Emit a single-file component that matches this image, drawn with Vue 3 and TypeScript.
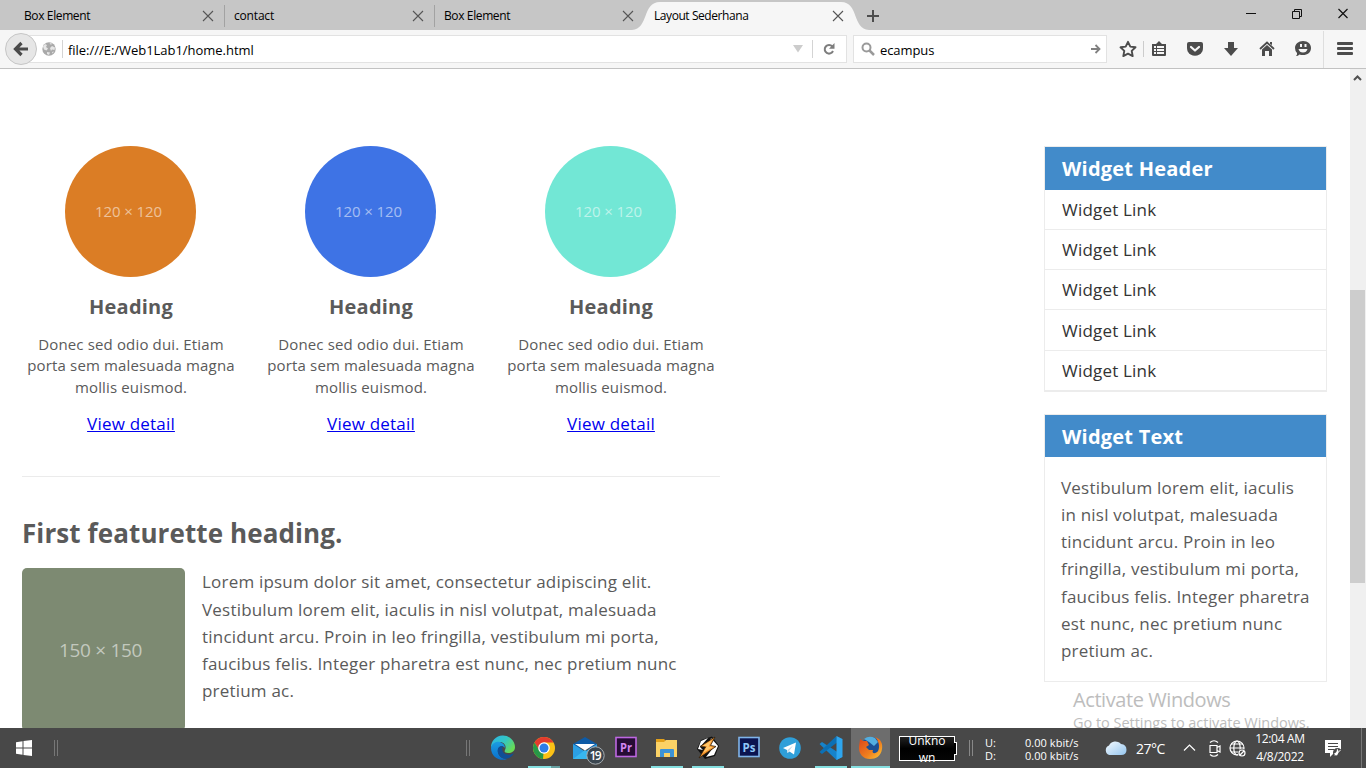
<script setup lang="ts">
interface Feature {
  color: string
}

const tabs: string[] = ['Box Element', 'contact', 'Box Element']

const features: Feature[] = [
  { color: '#db7d25' },
  { color: '#3e73e5' },
  { color: '#72e7d5' },
]

const featureLines: string[] = [
  'Donec sed odio dui. Etiam',
  'porta sem malesuada magna',
  'mollis euismod.',
]

const featuretteLines: string[] = [
  'Lorem ipsum dolor sit amet, consectetur adipiscing elit.',
  'Vestibulum lorem elit, iaculis in nisl volutpat, malesuada',
  'tincidunt arcu. Proin in leo fringilla, vestibulum mi porta,',
  'faucibus felis. Integer pharetra est nunc, nec pretium nunc',
  'pretium ac.',
]

const widgetLines: string[] = [
  'Vestibulum lorem elit, iaculis',
  'in nisl volutpat, malesuada',
  'tincidunt arcu. Proin in leo',
  'fringilla, vestibulum mi porta,',
  'faucibus felis. Integer pharetra',
  'est nunc, nec pretium nunc',
  'pretium ac.',
]
</script>

<template>
  <div class="screen">
    <header class="tabstrip">
      <div v-for="(t, i) in tabs" :key="i" class="tab" :class="{ ruled: i < 2 }">
        <span class="tab-title">{{ t }}</span>
        <svg class="tab-close" width="12" height="12" viewBox="0 0 12 12"><path d="M1 1L11 11M11 1L1 11" stroke="#555" stroke-width="1.1" fill="none" /></svg>
      </div>
      <div class="tab active">
        <svg class="tab-shape" width="238" height="30" viewBox="0 0 238 30"><path d="M0 30C17 29 10 2 28 2H209C227 2 220 29 237 30Z" fill="#f6f6f6" /></svg>
        <span class="tab-title">Layout Sederhana</span>
        <svg class="tab-close" width="12" height="12" viewBox="0 0 12 12"><path d="M1 1L11 11M11 1L1 11" stroke="#555" stroke-width="1.1" fill="none" /></svg>
      </div>
      <svg class="new-tab" width="14" height="14" viewBox="0 0 14 14"><path d="M7 1V13M1 7H13" stroke="#4d4d4d" stroke-width="2" /></svg>
      <svg class="win-controls" width="110" height="20" viewBox="0 0 110 20" fill="none" stroke="#111">
        <path d="M0 9.500H10" />
        <path d="M46.500 7.500H53.500V14.500H46.500ZM48.500 7V5.500H55.500V12.500H54" />
        <path d="M92.500 5L101.500 14M101.500 5L92.500 14" stroke-width="1.2" />
      </svg>
    </header>

    <div class="toolbar">
      <svg class="back" width="34" height="34" viewBox="0 0 34 34">
        <circle cx="17" cy="17" r="15.500" fill="#e6e6e6" stroke="#c6c6c6" />
        <path d="M17.500 11L11.500 17L17.500 23M12 17H24" fill="none" stroke="#4a4a4a" stroke-width="3.200" />
      </svg>
      <div class="urlbar">
        <svg class="globe" width="14" height="14" viewBox="0 0 14 14">
          <circle cx="7" cy="7" r="6.700" fill="#a9a9a9" />
          <path d="M1 4.500L3 2L5 3L4 5L6 6.500L4.500 8.500L2 7.500ZM7.500 1L10 1.500L9 3ZM8 6L10 4L13 5.500L12.500 8L10 7.500L9 9ZM5 10L8 10.500L7 13L5 12ZM10 10L12 9.500L10.500 11.500Z" fill="#e6e6e6" />
        </svg>
        <i class="bar-rule"></i>
        <span class="url">file:///E:/Web1Lab1/home.html</span>
        <svg class="drop" width="10" height="8" viewBox="0 0 10 8"><path d="M0 0H10L5 7.500Z" fill="#ccc" /></svg>
        <i class="bar-rule"></i>
        <svg class="reload" width="14" height="14" viewBox="0 0 14 14"><path d="M10.300 4.500A4.300 4.300 0 1 0 11 9" fill="none" stroke="#7d7d7d" stroke-width="2" /><path d="M12.500 1V6.800H7Z" fill="#7d7d7d" /></svg>
      </div>
      <div class="searchbar">
        <svg width="15" height="15" viewBox="0 0 15 15"><circle cx="5.500" cy="5.500" r="4" fill="none" stroke="#9a9a9a" stroke-width="2" /><path d="M8.500 8.500L13 13" stroke="#9a9a9a" stroke-width="2.500" /></svg>
        <span class="query">ecampus</span>
        <svg width="10" height="10" viewBox="0 0 10 10"><path d="M0 5H8M4.500 1L8.500 5L4.500 9" fill="none" stroke="#808080" stroke-width="1.800" /></svg>
      </div>
      <svg class="tools" width="246" height="38" viewBox="0 0 246 38" fill="#4c4c4c">
        <path d="M16 11.800L18.300 16.600L23.500 17.300L19.700 20.900L20.700 26.100L16 23.600L11.300 26.100L12.300 20.900L8.500 17.300L13.700 16.600Z" fill="none" stroke="#4c4c4c" stroke-width="1.900" stroke-linejoin="round" />
        <path d="M31 11H32V27H31Z" fill="#ccc" />
        <path fill-rule="evenodd" d="M40 14H44L47 11L50 14H54V25Q54 26 53 26H41Q40 26 40 25ZM42 16V18H44V16ZM45 16V18H52V16ZM42 19V21H44V19ZM45 19V21H52V19ZM42 22V24H44V22ZM45 22V24H52V22Z" />
        <path d="M77 12H89Q91 12 91 14V18Q91 22 87.500 24.500Q83 27 78.500 24.500Q75 22 75 18V14Q75 12 77 12Z" />
        <path d="M79 17L83 20.500L87 17" fill="none" stroke="#f6f6f6" stroke-width="2.200" stroke-linecap="round" stroke-linejoin="round" />
        <path d="M116 12H122V18H126L119 26L112 18H116Z" />
        <path d="M148 19L155 12.500L162 19" fill="none" stroke="#4c4c4c" stroke-width="1.800" />
        <path d="M155 15L160 19.500V26H157V21H153V26H150V19.500ZM158 12H160V15L158 14Z" />
        <path d="M191 11C196 11 199 14 199 18C199 22.500 195.500 25 191 25C189.500 25 188.500 25 187.500 24.500Q186 26 184 26Q185.500 24.500 185 23Q183 21 183 18C183 14 186.500 11 191 11Z" />
        <path d="M188 14H190V17H188ZM192.500 14H194.500V17H192.500ZM186.500 19H195.500Q194.500 22.500 191 22.500Q187.500 22.500 186.500 19Z" fill="#f6f6f6" />
        <path d="M211 1H212V38H211Z" fill="#dedede" />
        <g><rect x="225" y="12" width="16" height="3" rx="1" /><rect x="225" y="17" width="16" height="3" rx="1" /><rect x="225" y="22" width="16" height="3" rx="1" /></g>
      </svg>
    </div>

    <div class="viewport">
      <main class="page">
        <section class="content">
          <div class="features">
            <article v-for="(f, i) in features" :key="i" class="feature">
              <div class="disc" :style="{ background: f.color }"><span>120 × 120</span></div>
              <h3>Heading</h3>
              <p><span v-for="l in featureLines" :key="l" class="line">{{ l }}</span></p>
              <a>View detail</a>
            </article>
          </div>
          <hr>
          <h2>First featurette heading.</h2>
          <div class="featurette">
            <div class="thumb"><span>150 × 150</span></div>
            <p><span v-for="l in featuretteLines" :key="l" class="line">{{ l }}</span></p>
          </div>
        </section>
        <aside class="sidebar">
          <section class="widget links">
            <h3>Widget Header</h3>
            <ul><li v-for="n in 5" :key="n">Widget Link</li></ul>
          </section>
          <section class="widget text">
            <h3>Widget Text</h3>
            <p><span v-for="l in widgetLines" :key="l" class="line">{{ l }}</span></p>
          </section>
        </aside>
      </main>
      <div class="scrollbar">
        <svg width="9" height="6" viewBox="0 0 9 6"><path d="M1 5L4.500 1.500L8 5" fill="none" stroke="#505050" stroke-width="2" /></svg>
        <div class="thumb-bar"></div>
      </div>
      <div class="watermark">
        <div class="wm-title">Activate Windows</div>
        <div class="wm-sub">Go to Settings to activate Windows.</div>
      </div>
    </div>

    <footer class="taskbar">
      <svg class="start" width="16" height="16" viewBox="0 0 16 16" fill="#fff"><path d="M0 2.200L6.500 1.200V7.500H0ZM7.500 1L16 0V7.500H7.500ZM0 8.500H6.500V14.800L0 13.800ZM7.500 8.500H16V16L7.500 15Z" /></svg>
      <i class="grip grip-left"></i>
      <i class="grip grip-mid"></i>
      <div class="apps">
        <div class="app">
          <svg width="41" height="40" viewBox="0 0 41 40">
            <defs>
              <linearGradient id="edgeTop" x1="0" y1="0" x2="1" y2=".6"><stop offset="0" stop-color="#2cb4e8" /><stop offset=".55" stop-color="#33c6c4" /><stop offset="1" stop-color="#68db55" /></linearGradient>
              <linearGradient id="edgeLow" x1="0" y1="0" x2="0" y2="1"><stop offset="0" stop-color="#1b9de2" /><stop offset="1" stop-color="#0a6fcb" /></linearGradient>
            </defs>
            <path d="M9 20A12 12 0 0 1 33 19C33 23 30 25 26 25C23 25 22 24 23 22C25 18 22 14 18 14C13 14 10 17 9 20Z" fill="url(#edgeTop)" />
            <path d="M9 20C10 15 14 13 18 14C21 15 23 17 23 20C21 17 17 18 16 21C15 27 19 31 25 31C18 34 9 29 9 20Z" fill="url(#edgeLow)" />
            <path d="M19 18C16 19 15 22 16 25C18 30 23 32 27 30C29 29 31 27 32 25C28 28 23 27 21 24C20 22 20 20 21 18Z" fill="#104f96" />
          </svg>
        </div>
        <div class="app running grouped">
          <svg width="41" height="40" viewBox="0 0 41 40">
            <circle cx="21" cy="20" r="11" fill="#fbc116" />
            <path d="M21 9A11 11 0 0 1 30.500 14.500H21L16.300 22.500L11.470 14.500A11 11 0 0 1 21 9Z" fill="#e33b2e" />
            <path d="M11.470 14.500L16.500 22.500L20.500 25L20 31A11 11 0 0 1 11.470 14.500Z" fill="#279847" />
            <circle cx="21" cy="20" r="5.800" fill="#fff" /><circle cx="21" cy="20" r="4.500" fill="#2e7de8" />
          </svg>
        </div>
        <div class="app">
          <svg width="50" height="40" viewBox="0 0 50 40">
            <path d="M9 16L21 9L33 16V20H9Z" fill="#0e5ba6" />
            <path d="M9 16L21 23.500L33 16V31H9Z" fill="#2b9fe4" /><path d="M9 31L21 22L33 31Z" fill="#38b6ef" />
            <path d="M11 16H31L21 22.500Z" fill="#fff" />
            <circle cx="31.500" cy="27.500" r="8.700" fill="#3b4650" stroke="#a8adb0" />
            <text x="31.500" y="32" font-size="12" font-weight="600" fill="#fff" text-anchor="middle" textLength="12">19</text>
          </svg>
        </div>
        <div class="app">
          <svg width="41" height="40" viewBox="0 0 41 40"><rect x="11" y="9.500" width="20" height="19" fill="#260c34" stroke="#bd67e2" stroke-width="1.600" /><text x="21" y="23.500" font-size="12" font-weight="700" fill="#d184f0" text-anchor="middle" textLength="12" lengthAdjust="spacingAndGlyphs">Pr</text></svg>
        </div>
        <div class="app running">
          <svg width="41" height="40" viewBox="0 0 41 40"><path d="M10 11H18L20 13H31V29H10Z" fill="#e3a11a" /><path d="M10 14H18L20 12H31V29H10Z" fill="#fbd266" /><path d="M14 22Q14 21 15 21H27Q28 21 28 22V29H24V25H18V29H14Z" fill="#3d93d6" /></svg>
        </div>
        <div class="app running">
          <svg width="41" height="40" viewBox="0 0 41 40"><path d="M14 12L25 8.500L32 18L28 28L18 31L10 21Z" fill="#111" /><path d="M21 10L13 19L16 22L11 21L14 13ZM24 10L31 18L27 27L19 29L26 20L22 18Z" fill="#fff" /><path d="M28 9L13 18.500L18.500 19L12 30L29 18.500L23.500 17.500Z" fill="#f6952a" stroke="#30200c" stroke-width=".8" /><path d="M25 12L15.500 18H20L16 25L26 19L21.500 18.500Z" fill="#ffc66b" /></svg>
        </div>
        <div class="app">
          <svg width="41" height="40" viewBox="0 0 41 40"><rect x="11" y="9.500" width="20" height="19" fill="#0b1450" stroke="#7fb4ea" stroke-width="1.600" /><text x="21" y="23.500" font-size="12" font-weight="700" fill="#8fc7f8" text-anchor="middle" textLength="13" lengthAdjust="spacingAndGlyphs">Ps</text></svg>
        </div>
        <div class="app">
          <svg width="41" height="40" viewBox="0 0 41 40"><circle cx="21" cy="20" r="10.800" fill="#2f9fd9" /><path d="M14 20L27 14.500L25 26.500L20.500 23.500L18.500 25L18 22Z" fill="#fff" /><path d="M18.500 22L24 17.500L20 23L18.500 25Z" fill="#bdd9ea" /></svg>
        </div>
        <div class="app running">
          <svg width="41" height="40" viewBox="0 0 41 40"><path d="M9.500 16L12 14L32 27V29L26.500 32Z" fill="#1683cb" /><path d="M9.500 24L26.500 8L27 14.500L12 26Z" fill="#0b70b5" /><path d="M26.500 8L32.500 11V29L26.500 32Z" fill="#2ea6ef" /></svg>
        </div>
        <div class="app running current">
          <svg width="39" height="40" viewBox="0 0 39 40">
            <defs><linearGradient id="fox" x1="0" y1="0" x2="1" y2="1"><stop offset="0" stop-color="#d9411c" /><stop offset=".6" stop-color="#f0801e" /><stop offset="1" stop-color="#f9cc3a" /></linearGradient></defs>
            <circle cx="20" cy="19" r="10" fill="#1c4f94" /><path d="M13 11Q18 7 24 10L27 14L23 18L18 14Z" fill="#53aee0" />
            <path d="M9 11L12 13L16 13L18 17L15 19L18 22L22 22C20 26 25 26 27 23C29 19 28 13 24 9C30 11 32 16 31 21C30 28 25 31 19 31C12 31 8 26 8 20C8 16 9 14 9 11Z" fill="url(#fox)" />
          </svg>
        </div>
      </div>
      <div class="battery"><div class="battery-body"><span>Unkno</span><span>wn</span></div><i></i></div>
      <i class="grip grip-right"></i>
      <div class="net"><span>U:</span><span>0.00 kbit/s</span><span>D:</span><span>0.00 kbit/s</span></div>
      <svg class="cloud" width="24" height="18" viewBox="0 0 24 18">
        <defs><linearGradient id="sky" x1="0" y1="0" x2="1" y2="1"><stop offset="0" stop-color="#f4faff" /><stop offset="1" stop-color="#94c5ee" /></linearGradient></defs>
        <path d="M5.500 16A5 5 0 0 1 5 6.500A7 6.500 0 0 1 17 5Q22.500 5.500 22.500 11Q22.500 16 17 16Z" fill="url(#sky)" />
      </svg>
      <span class="temp">27°C</span>
      <svg class="tray" width="66" height="20" viewBox="0 0 66 20" fill="none" stroke="#fff" stroke-width="1.200">
        <path d="M1 12.500L6.500 7L12 12.500" />
        <path d="M27 4.500Q31 1 35 4.500M27 16.500Q31 20 35 16.500M27 7.500H34V14.500H27ZM34 9.500L37 8V14L34 12.500" />
        <circle cx="54" cy="10" r="7" /><ellipse cx="54" cy="10" rx="3.200" ry="7" /><path d="M47 10H61M48 6H60M48 14H60" />
        <circle cx="59" cy="15" r="4" fill="#484848" stroke="none" /><circle cx="59" cy="15" r="3" /><path d="M57 17L61 13" />
      </svg>
      <div class="clock"><span>12:04 AM</span><span>4/8/2022</span></div>
      <svg class="notice" width="18" height="18" viewBox="0 0 18 18"><path d="M0 0H16V13H9L5 17V13H0Z" fill="#fff" /><path d="M3 3.500H13M3 6.500H13M3 9.500H9" stroke="#484848" /><circle cx="12.500" cy="12.500" r="4.500" fill="#484848" /><path d="M12 8.500Q15 11 12 15.500Q9.500 15.500 9 13.500Q12 13 12 8.500Z" fill="#fff" /><path d="M10 15.500L15.500 10" stroke="#fff" /></svg>
      <i class="peek"></i>
    </footer>
  </div>
</template>

<style>
body { margin: 0; overflow: hidden; }
</style>

<style scoped>
.screen { width: 1366px; height: 768px; display: flex; flex-direction: column; overflow: hidden; background: #fff; font-family: "Open Sans", "Noto Sans", sans-serif; color: #000; }
.screen * { box-sizing: border-box; }
svg { display: block; flex: none; }
span { white-space: nowrap; }
i { flex: none; }

.tabstrip { height: 30px; flex: none; display: flex; background: #c6c6c6; }
.tab { width: 210px; height: 30px; flex: none; padding-left: 24px; display: flex; align-items: center; position: relative; font-size: 12px; }
.tab.ruled::after { content: ""; position: absolute; left: 224px; top: 5px; width: 1px; height: 22px; background: #a2a2a2; }
.tab-title { width: 178px; flex: none; line-height: 30px; position: relative; letter-spacing: -0.38px; padding-top: 1px; }
.tab.ruled + .tab.ruled .tab-title { letter-spacing: -0.18px; }
.active .tab-title { letter-spacing: -0.43px; }
.tab-close { position: relative; margin-top: 2px; }
.tab-shape { position: absolute; left: 2px; top: 0; }
.new-tab { margin: 9px 0 0 26px; }
.win-controls { margin: 4px 0 0 366px; }

.toolbar { height: 39px; flex: none; display: flex; background: #f6f6f6; border-bottom: 1px solid #c2c2c2; }
.back { margin: 2px 0 0 4px; position: relative; z-index: 1; }
.urlbar { width: 818px; height: 28px; flex: none; margin: 5px 0 0 -9px; padding-left: 12px; background: #fff; border: 1px solid #e2e2e2; display: flex; align-items: center; }
.bar-rule { width: 1px; height: 18px; background: #d4d4d4; }
.globe { margin-right: 6px; }
.url { font-size: 13px; width: 730px; flex: none; padding: 2px 0 0 5px; letter-spacing: -0.03px; line-height: 24px; }
.drop { margin-right: 9px; }
.reload { margin-left: 9px; }
.searchbar { width: 254px; height: 28px; flex: none; margin: 5px 0 0 6px; padding-left: 7px; background: #fff; border: 1px solid #e2e2e2; display: flex; align-items: center; }
.query { width: 215px; flex: none; padding: 2px 0 0 4px; font-size: 13px; line-height: 24px; letter-spacing: -0.08px; }
.tools { margin-left: 5px; }

.viewport { height: 659px; flex: none; display: flex; position: relative; overflow: hidden; }
.page { width: 1350px; flex: none; padding: 77px 0 0 11px; display: flex; color: #5a5a5a; }
.content { width: 720px; flex: none; }
.features { display: flex; height: 291px; }
.feature { width: 240px; display: flex; flex-direction: column; align-items: center; }
.disc { width: 131px; height: 131px; flex: none; margin-right: 1px; border-radius: 50%; display: flex; align-items: center; justify-content: center; color: rgba(255, 255, 255, .55); font-size: 15px; font-weight: 400; letter-spacing: -0.08px; padding: 0 4px 2px 0; }
h2, h3, p, ul { margin: 0; padding: 0; }
.feature h3 { font-size: 20px; line-height: 28px; margin-top: 16px; letter-spacing: 0.2px; }
.feature p { margin-top: 12.600px; font-size: 15px; line-height: 21.450px; text-align: center; letter-spacing: 0.15px; }
.line { display: block; }
.feature a { margin-top: 12.050px; font-size: 17px; line-height: 27px; color: #0000ee; text-decoration: underline; white-space: nowrap; letter-spacing: 0.2px; }
hr { border: 0; height: 1px; background: #ebebeb; margin: 39px 0 0 11px; width: 698px; }
h2 { font-size: 26px; line-height: 36px; margin: 38px 0 0 11px; white-space: nowrap; letter-spacing: 0.1px; }
.featurette { display: flex; margin: 17px 0 0 11px; }
.thumb { width: 163px; height: 163px; flex: none; border-radius: 5px; background: #7d8a72; color: rgba(255, 255, 255, .55); display: flex; align-items: center; justify-content: center; padding: 1px 6px 0 0; font-size: 19px; font-weight: 400; letter-spacing: -0.3px; }
.featurette p { margin: 0.400px 0 0 17px; font-size: 17px; line-height: 27.200px; letter-spacing: 0.2px; }

.sidebar { width: 283px; flex: none; margin-left: 313px; }
.widget { border: 1px solid #ececec; }
.widget h3 { background: #428bca; color: #fff; font-size: 20px; height: 42.700px; line-height: 43px; padding-left: 17px; white-space: nowrap; letter-spacing: 0.23px; }
.links { height: 246px; }
.links li { list-style: none; height: 40.250px; border-bottom: 1px solid #ececec; padding: 0.150px 0 0 17px; font-size: 17px; line-height: 39px; color: #333; letter-spacing: 0.2px; }
.text { height: 268px; margin-top: 22px; }
.text h3 { height: 42px; line-height: 44px; }
.text p { padding: 16.800px 0 0 16px; font-size: 17px; line-height: 27.200px; letter-spacing: 0.2px; }

.scrollbar { width: 16px; flex: none; background: #f0f0f0; padding: 6px 0 0; }
.scrollbar svg { margin-left: 3px; }
.thumb-bar { width: 15px; height: 293px; background: #cdcdcd; margin-top: 209px; }
.watermark { position: absolute; left: 1073px; top: 617px; color: #bdbdbd; }
.wm-title { font-size: 20px; line-height: 28px; white-space: nowrap; letter-spacing: -0.42px; }
.wm-sub { font-size: 14.500px; line-height: 18px; white-space: nowrap; letter-spacing: -0.03px; }

.taskbar { height: 40px; flex: none; display: flex; background: #484848; color: #fff; }
.start { margin: 12px 0 0 16px; }
.grip { width: 4px; height: 16px; margin-top: 12px; border-left: 1px solid #777; border-right: 1px solid #777; }
.grip-left { margin-left: 22px; }
.grip-mid { margin-left: 408px; }
.apps { display: flex; margin-left: 12px; width: 408px; flex: none; }
.app { width: 41px; height: 40px; flex: none; position: relative; }
.app.running::after { content: ""; position: absolute; left: 5px; bottom: 0; width: 32px; height: 2px; background: #85dfe0; }
.app.grouped::after { background: linear-gradient(90deg, #85dfe0 23px, #659fa0 23px); }
.app.current { width: 39px; background: #6d6d6d; }
.app.current::after { left: 0; width: 39px; }
.battery { display: flex; flex: none; align-items: center; margin: 8px 0 0 9px; height: 25px; width: 59px; }
.battery-body { width: 56px; height: 25px; flex: none; border: 1px solid #fff; background: linear-gradient(#222, #000 50%, #050505); display: flex; flex-direction: column; align-items: center; font-size: 12px; }
.battery-body span { line-height: 17px; height: 17px; flex: none; position: relative; top: -5px; }
.battery i { width: 3px; height: 13px; margin-left: -1px; background: #000; border: 1px solid #fff; border-left: 0; }
.grip-right { margin-left: 11px; border-color: #888; }
.net { display: grid; flex: none; grid-template-columns: 40px 56px; margin: 8px 0 0 12px; font-size: 11px; line-height: 13px; height: 26px; letter-spacing: 0.05px; }
.cloud { margin: 11px 0 0 23px; }
.temp { font-size: 14px; line-height: 41px; margin-left: 8px; width: 30px; flex: none; letter-spacing: -0.5px; }
.tray { margin: 10px 0 0 17px; }
.clock { width: 62px; flex: none; display: flex; flex-direction: column; align-items: center; font-size: 12px; line-height: 18px; padding-top: 2px; letter-spacing: -0.3px; }
.notice { margin: 12px 0 0 14px; }
.peek { width: 1px; height: 40px; background: #777; margin-left: 18px; }
</style>
